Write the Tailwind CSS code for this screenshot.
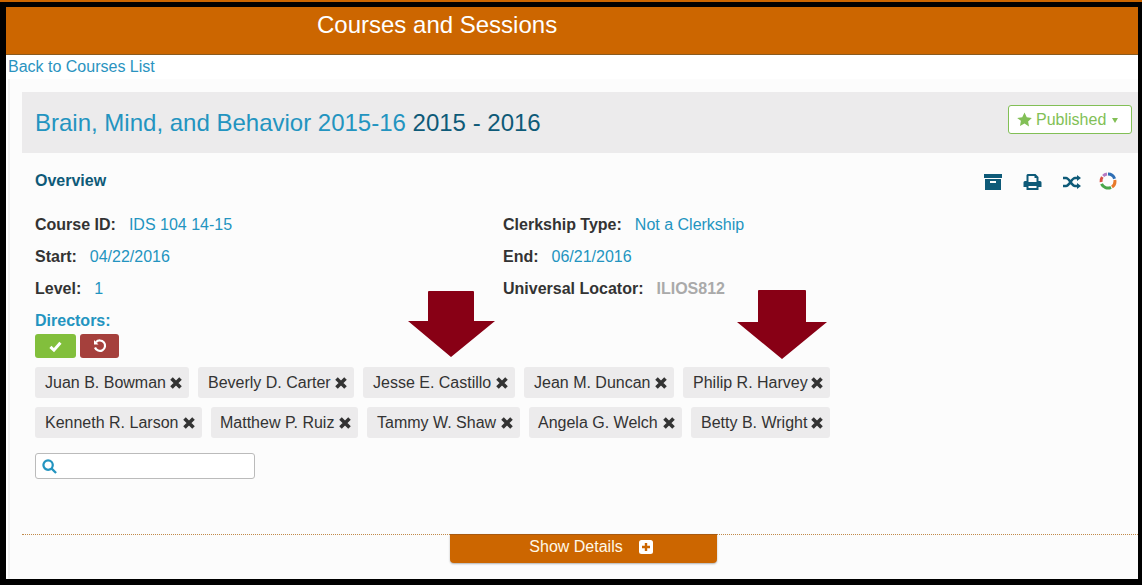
<!DOCTYPE html>
<html>
<head>
<meta charset="utf-8">
<title>Courses and Sessions</title>
<script src="https://cdn.jsdelivr.net/npm/@tailwindcss/browser@4"></script>
</head>
<body class="bg-black font-['Liberation_Sans',Arial,sans-serif] text-[16px] text-[#333]">
<div class="flex h-[585px] w-[1142px] flex-col overflow-hidden bg-black">
    <div class="h-[2px] shrink-0 bg-[#cc6600]"></div>
    <div class="min-h-0 flex-1 pb-[6px] pl-[6px] pr-[4px] pt-[5px]">
    <div class="flex h-full flex-col bg-white">
        <!-- header -->
        <div class="flex h-[48px] shrink-0 border-b border-[#8a5a1e] bg-[#cc6600]">
            <h1 class="pl-[311px] pt-[4px] text-[24px] leading-[28px] text-white">Courses and Sessions</h1>
        </div>
        <a class="block h-[24px] shrink-0 pl-[2px] pt-[2px] leading-[20px] text-[#2a93c0]">Back to Courses List</a>

        <div class="ml-[2px] flex min-h-0 flex-1 flex-col border-l-2 border-[#f1f1f1] bg-[#fcfcfc] pl-[12px]">
            <!-- title bar -->
            <div class="mt-[13px] flex h-[61px] shrink-0 items-center justify-between bg-[#ecebec] pl-[13px] pr-[6px]">
                <h2 class="text-[24px] text-[#0e5a78]"><span class="text-[#2394c0]">Brain, Mind, and Behavior 2015-16</span> 2015 - 2016</h2>
                <div class="mb-[6px] flex h-[29px] w-[124px] items-center rounded-[3px] border border-[#82bf56] bg-white pl-[8px] text-[#82bf56]">
                    <svg class="h-[15px] w-[15px]" viewBox="0 0 24 24" fill="#82bf56"><path d="M12 .8l3.600 7.400 8.100 1.200-5.900 5.700 1.400 8.100L12 18.400l-7.200 3.800 1.400-8.100L.3 9.400l8.100-1.200z"/></svg>
                    <span class="ml-[4px]">Published</span>
                    <span class="ml-[6px] mt-[1px] h-0 w-0 border-x-[3px] border-t-[5px] border-x-transparent border-t-[#82bf56]"></span>
                </div>
            </div>

            <div class="relative min-h-0 flex-1 pl-[13px]">
                <div class="flex items-start justify-between pr-[21px] pt-[19px]">
                    <h3 class="font-bold leading-[18px] text-[#0e5a78]">Overview</h3>
                    <div class="mt-[2px] flex items-center gap-[21px]">
                        <svg class="h-[16px] w-[18px]" viewBox="0 0 18 16" fill="#0e5a78"><path d="M0 0h18v4H0zM1 5h16v11H1zM6 7v2h6V7z" fill-rule="evenodd"/></svg>
                        <svg class="h-[16px] w-[19px]" viewBox="0 0 18 16" fill="#0e5a78"><path fill-rule="evenodd" d="M4 0h8l3 3v4h1.500A1.500 1.500 0 0 1 18 8.500V13h-3v3H3v-3H0V8.500A1.500 1.500 0 0 1 1.500 7H3V1zM5 2v6h8V4h-2V2zM5 12v2h8v-2z"/></svg>
                        <svg class="-ml-[1px] h-[16px] w-[20px]" viewBox="0 0 18 16" fill="none" stroke="#0e5a78" stroke-width="2.400"><path d="M0 4h3c3.500 0 5.500 8 9 8h3M0 12h3c3.500 0 5.500-8 9-8h3"/><path d="M14 1l4 3-4 3zM14 9l4 3-4 3z" fill="#0e5a78" stroke="none"/></svg>
                        <svg class="-ml-[4px] -mt-[3px] h-[18px] w-[18px]" viewBox="0 0 18 18" fill="none" stroke-width="3">
                            <path d="M9 2a7 7 0 0 1 6.600 4.700" stroke="#2f6fb5"/>
                            <path d="M15.800 8a7 7 0 0 1-2.800 7" stroke="#e87a2a"/>
                            <path d="M12 15.300a7 7 0 0 1-9.500-3.500" stroke="#4aa64a"/>
                            <path d="M2.100 10a7 7 0 0 1 1.200-5" stroke="#d94f45"/>
                            <path d="M4.200 4a7 7 0 0 1 3.800-2" stroke="#b57bc4"/>
                        </svg>
                    </div>
                </div>

                <!-- overview fields -->
                <div class="mt-[25px] grid grid-cols-[468px_1fr] gap-y-[12px] leading-[20px]">
                    <div><b>Course ID:</b><span class="ml-[13px] text-[#2394c0]">IDS 104 14-15</span></div>
                    <div><b>Clerkship Type:</b><span class="ml-[13px] text-[#2394c0]">Not a Clerkship</span></div>
                    <div><b>Start:</b><span class="ml-[13px] text-[#2394c0]">04/22/2016</span></div>
                    <div><b>End:</b><span class="ml-[13px] text-[#2394c0]">06/21/2016</span></div>
                    <div><b>Level:</b><span class="ml-[13px] text-[#2394c0]">1</span></div>
                    <div><b>Universal Locator:</b><span class="ml-[13px] font-bold text-[#aaa]">ILIOS812</span></div>
                </div>

                <!-- directors -->
                <div class="mt-[12px] font-bold leading-[20px] text-[#2394c0]">Directors:</div>
                <div class="mt-[3px] flex gap-[4px]">
                    <button class="flex h-[24px] w-[41px] items-center justify-center rounded-[3px] bg-[#82bf3c]">
                        <svg class="h-[13px] w-[13px]" viewBox="0 0 14 14" fill="none" stroke="#fff" stroke-width="3.200"><path d="M1.500 7.500l3.800 3.500 7-8"/></svg>
                    </button>
                    <button class="flex h-[24px] w-[39px] items-center justify-center rounded-[3px] bg-[#a5403c]">
                        <svg class="h-[14px] w-[14px]" viewBox="0 0 14 14" fill="none" stroke="#fff" stroke-width="2.200"><path d="M3 3.200A5.200 5.200 0 1 1 2 8.500"/><path d="M1 1v4.500h4.500z" fill="#fff" stroke="none"/></svg>
                    </button>
                </div>

                <div class="mt-[9px] flex flex-col gap-[9px] leading-[20px]">
                    <div class="flex gap-[9px]">
                        <span class="flex h-[31px] w-[154px] items-center justify-between rounded-[3px] bg-[#ecebec] pl-[10px] pr-[7px]">Juan B. Bowman<svg class="h-[12px] w-[12px]" viewBox="0 0 12 12" stroke="#333" stroke-width="3.600"><path d="M1.500 1.500l9 9M10.500 1.500l-9 9"/></svg></span>
                        <span class="flex h-[31px] w-[156px] items-center justify-between rounded-[3px] bg-[#ecebec] pl-[10px] pr-[7px]">Beverly D. Carter<svg class="h-[12px] w-[12px]" viewBox="0 0 12 12" stroke="#333" stroke-width="3.600"><path d="M1.500 1.500l9 9M10.500 1.500l-9 9"/></svg></span>
                        <span class="flex h-[31px] w-[152px] items-center justify-between rounded-[3px] bg-[#ecebec] pl-[10px] pr-[7px]">Jesse E. Castillo<svg class="h-[12px] w-[12px]" viewBox="0 0 12 12" stroke="#333" stroke-width="3.600"><path d="M1.500 1.500l9 9M10.500 1.500l-9 9"/></svg></span>
                        <span class="flex h-[31px] w-[150px] items-center justify-between rounded-[3px] bg-[#ecebec] pl-[10px] pr-[7px]">Jean M. Duncan<svg class="h-[12px] w-[12px]" viewBox="0 0 12 12" stroke="#333" stroke-width="3.600"><path d="M1.500 1.500l9 9M10.500 1.500l-9 9"/></svg></span>
                        <span class="flex h-[31px] w-[147px] items-center justify-between rounded-[3px] bg-[#ecebec] pl-[10px] pr-[7px]">Philip R. Harvey<svg class="h-[12px] w-[12px]" viewBox="0 0 12 12" stroke="#333" stroke-width="3.600"><path d="M1.500 1.500l9 9M10.500 1.500l-9 9"/></svg></span>
                    </div>
                    <div class="flex gap-[9px]">
                        <span class="flex h-[31px] w-[167px] items-center justify-between rounded-[3px] bg-[#ecebec] pl-[10px] pr-[7px]">Kenneth R. Larson<svg class="h-[12px] w-[12px]" viewBox="0 0 12 12" stroke="#333" stroke-width="3.600"><path d="M1.500 1.500l9 9M10.500 1.500l-9 9"/></svg></span>
                        <span class="flex h-[31px] w-[147px] items-center justify-between rounded-[3px] bg-[#ecebec] pl-[9px] pr-[7px]">Matthew P. Ruiz<svg class="h-[12px] w-[12px]" viewBox="0 0 12 12" stroke="#333" stroke-width="3.600"><path d="M1.500 1.500l9 9M10.500 1.500l-9 9"/></svg></span>
                        <span class="flex h-[31px] w-[153px] items-center justify-between rounded-[3px] bg-[#ecebec] pl-[10px] pr-[7px]">Tammy W. Shaw<svg class="h-[12px] w-[12px]" viewBox="0 0 12 12" stroke="#333" stroke-width="3.600"><path d="M1.500 1.500l9 9M10.500 1.500l-9 9"/></svg></span>
                        <span class="flex h-[31px] w-[153px] items-center justify-between rounded-[3px] bg-[#ecebec] pl-[9px] pr-[7px]">Angela G. Welch<svg class="h-[12px] w-[12px]" viewBox="0 0 12 12" stroke="#333" stroke-width="3.600"><path d="M1.500 1.500l9 9M10.500 1.500l-9 9"/></svg></span>
                        <span class="flex h-[31px] w-[139px] items-center justify-between rounded-[3px] bg-[#ecebec] pl-[10px] pr-[7px]">Betty B. Wright<svg class="h-[12px] w-[12px]" viewBox="0 0 12 12" stroke="#333" stroke-width="3.600"><path d="M1.500 1.500l9 9M10.500 1.500l-9 9"/></svg></span>
                    </div>
                </div>

                <!-- search -->
                <div class="mt-[15px] flex h-[26px] w-[220px] items-center rounded-[3px] border border-[#bbb] bg-white pl-[6px]">
                    <svg class="h-[15px] w-[15px]" viewBox="0 0 16 16" fill="none" stroke="#2394c0" stroke-width="2.400"><circle cx="6.500" cy="6.500" r="5"/><path d="M10.300 10.300L15 15"/></svg>
                </div>

                <!-- arrows drawn over the page -->
                <svg class="absolute left-[386px] top-[138px] h-[66px] w-[87px]" viewBox="0 0 87 66" fill="#880015"><path d="M20 1a1 1 0 0 1 1-1h44a1 1 0 0 1 1 1v29h21L43 66 0 30h20z"/></svg>
                <svg class="absolute left-[715px] top-[137px] h-[69px] w-[90px]" viewBox="0 0 90 69" fill="#880015"><path d="M21 1a1 1 0 0 1 1-1h46a1 1 0 0 1 1 1v31h21L45 69 0 32h21z"/></svg>
            </div>

            <!-- details toggle -->
            <div class="relative mb-[16px] h-[29px] shrink-0 border-t border-dotted border-[#c08a4a]">
                <div class="absolute -top-px left-[428px] flex h-[29px] w-[267px] items-start justify-center gap-[16px] rounded-b-[4px] border-t border-[#a85a10] bg-[#cc6600] pl-[15px] pt-[2px] text-[#fff8e8] shadow-[0_1px_2px_rgba(0,0,0,0.3)]">
                    <span class="leading-[20px]">Show Details</span>
                    <svg class="mt-[3px] h-[14px] w-[14px]" viewBox="0 0 14 14"><rect width="14" height="14" rx="2.500" fill="#fff"/><path d="M7 3v8M3 7h8" stroke="#cc6600" stroke-width="2.400"/></svg>
                </div>
            </div>
        </div>
    </div>
    </div>
</div>
</body>
</html>
